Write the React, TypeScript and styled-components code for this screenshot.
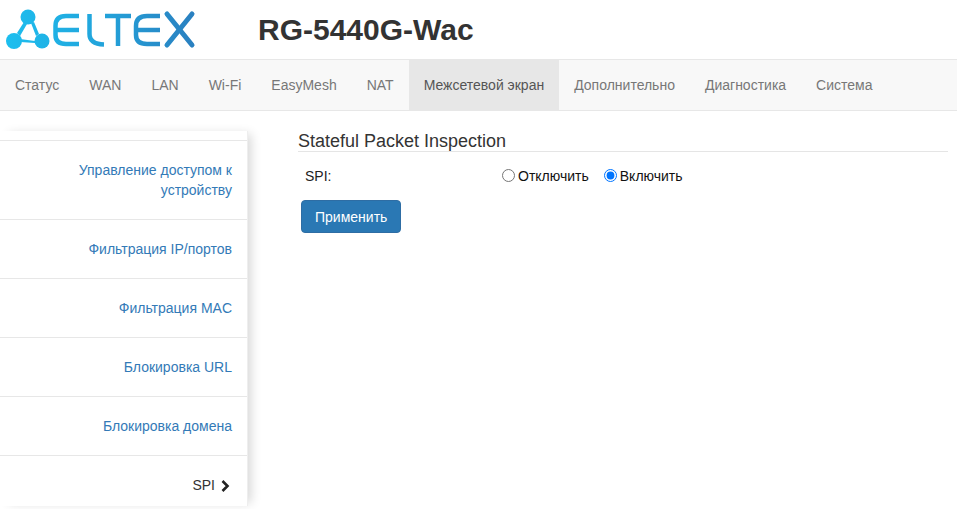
import { createGlobalStyle } from "styled-components";
import styled from "styled-components";

const GlobalStyle = createGlobalStyle`
  * {
    box-sizing: border-box;
  }
  html,
  body {
    margin: 0;
    height: 100%;
    background: #fff;
    overflow: hidden;
  }
  body {
    font-family: "Liberation Sans", Arial, sans-serif;
    font-size: 14px;
    line-height: 20px;
    color: #333;
  }
`;

const Header = styled.header`
  display: flex;
  align-items: center;
  height: 59px;
  background: #fff;
`;

const Logo = styled.svg`
  display: block;
  width: 210px;
  height: 59px;
  flex: none;
`;

const Model = styled.h1`
  margin: 0 0 0 48px;
  font-size: 30px;
  line-height: 33px;
  font-weight: 700;
  color: #333;
`;

const Navbar = styled.nav`
  display: flex;
  height: 52px;
  background: #f8f8f8;
  border-top: 1px solid #e7e7e7;
  border-bottom: 1px solid #e7e7e7;
`;

const NavItem = styled.a<{ $active?: boolean }>`
  padding: 15px 15px;
  color: #555;
  color: ${(p) => (p.$active ? "#555" : "#777")};
  background: ${(p) => (p.$active ? "#e7e7e7" : "transparent")};
  text-decoration: none;
  white-space: nowrap;
`;

const Body = styled.div`
  display: flex;
  align-items: flex-start;
  padding-top: 20px;
`;

const Sidebar = styled.aside`
  flex: none;
  width: 248px;
  height: 375px;
  padding-top: 9px;
  overflow: hidden;
  background: #fff;
  border-right: 1px solid #eee;
  box-shadow: 6px 0 10px -3px rgba(0, 0, 0, 0.16);
`;

const SideItem = styled.a<{ $current?: boolean }>`
  display: flex;
  justify-content: flex-end;
  align-items: center;
  padding: 19px 15px 19px 60px;
  border-top: 1px solid #e7e7e7;
  color: ${(p) => (p.$current ? "#333" : "#337ab7")};
  text-align: right;
  text-decoration: none;
`;

const Chevron = styled.svg`
  flex: none;
  width: 10px;
  height: 12px;
  margin: 2px 2px 0 5px;
`;

const Content = styled.main`
  flex: 1;
  padding: 0 9px 0 50px;
`;

const Title = styled.h4`
  margin: 0;
  padding-top: 0;
  font-size: 18px;
  line-height: 20px;
  font-weight: 400;
  color: #333;
  border-bottom: 1px solid #e5e5e5;
`;

const FormRow = styled.div`
  display: flex;
  align-items: center;
  height: 48px;
  padding-left: 7px;
  color: #222;
`;

const FieldLabel = styled.label`
  width: 197px;
  flex: none;
`;

const RadioLabel = styled.label`
  display: inline-flex;
  align-items: center;
  margin-right: 15px;
  color: #111;
`;

const Radio = styled.input`
  width: 13px;
  height: 13px;
  margin: 0 3px 2px 0;
`;

const ApplyButton = styled.button`
  display: block;
  height: 33px;
  margin: 0 0 0 3px;
  padding: 0 13px;
  font: inherit;
  color: #fff;
  background: #337ab7;
  background: #2a78b4;
  border: 1px solid #2e6da4;
  border-radius: 4px;
`;

const navItems = [
  "Статус",
  "WAN",
  "LAN",
  "Wi-Fi",
  "EasyMesh",
  "NAT",
  "Межсетевой экран",
  "Дополнительно",
  "Диагностика",
  "Система",
];

const sideItems = [
  "Управление доступом к устройству",
  "Фильтрация IP/портов",
  "Фильтрация MAC",
  "Блокировка URL",
  "Блокировка домена",
];

const EltexLogo = () => (
  <Logo viewBox="0 0 210 59">
    <defs>
      <linearGradient id="eltexGrad" x1="0" y1="0" x2="194" y2="0" gradientUnits="userSpaceOnUse">
        <stop offset="0" stopColor="#1cc0f0" />
        <stop offset="0.5" stopColor="#22a5dc" />
        <stop offset="1" stopColor="#2a80c0" />
      </linearGradient>
    </defs>
    <g fill="url(#eltexGrad)" stroke="none">
      <circle cx="28" cy="17" r="7.5" />
      <circle cx="14" cy="41" r="8" />
      <circle cx="42" cy="41" r="7.5" />
      <path d="M24 22 L27 24 L20 36 L17 33 Z" />
      <path d="M31 23 L34 22 L39 34 L36 36 Z" />
      <path d="M20 39 L35 41 L35 43 L20 42 Z" />
    </g>
    <g fill="none" stroke="url(#eltexGrad)" strokeWidth="4.5">
      <path d="M79 16 H66 Q55.500 16 55.500 26 V35 Q55.500 44 66 44 H79" />
      <path d="M56 30 H79" />
      <path d="M89.500 14 V34 Q89.500 44 104 44.500" />
      <path d="M105 16 H131" />
      <path d="M118 16 V46" />
      <path d="M160 16 H147 Q136 16 136 26 V35 Q136 44 147 44 H160" />
      <path d="M136 30 H160" />
      <path d="M167 14 L192 45" strokeWidth="5" strokeLinecap="round" />
      <path d="M192 14 L167 45" strokeWidth="5" strokeLinecap="round" />
    </g>
  </Logo>
);

export default function App() {
  return (
    <>
      <GlobalStyle />
      <Header>
        <EltexLogo />
        <Model>RG-5440G-Wac</Model>
      </Header>
      <Navbar>
        {navItems.map((item) => (
          <NavItem key={item} $active={item === "Межсетевой экран"}>
            {item}
          </NavItem>
        ))}
      </Navbar>
      <Body>
        <Sidebar>
          {sideItems.map((item) => (
            <SideItem key={item}>{item}</SideItem>
          ))}
          <SideItem $current>
            SPI
            <Chevron viewBox="0 0 10 12">
              <path d="M2.500 1 L7.500 6 L2.500 11" fill="none" stroke="#222" strokeWidth="2.600" />
            </Chevron>
          </SideItem>
        </Sidebar>
        <Content>
          <Title>Stateful Packet Inspection</Title>
          <FormRow>
            <FieldLabel>SPI:</FieldLabel>
            <RadioLabel>
              <Radio type="radio" name="spi" />
              Отключить
            </RadioLabel>
            <RadioLabel>
              <Radio type="radio" name="spi" defaultChecked />
              Включить
            </RadioLabel>
          </FormRow>
          <ApplyButton type="button">Применить</ApplyButton>
        </Content>
      </Body>
    </>
  );
}
